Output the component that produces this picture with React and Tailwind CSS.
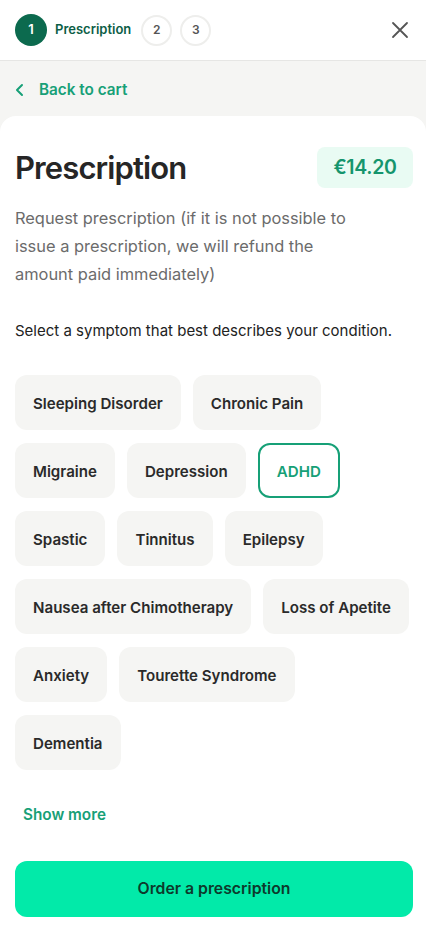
import React from "react";

const rows = [
  ["Sleeping Disorder", "Chronic Pain"],
  ["Migraine", "Depression", "ADHD"],
  ["Spastic", "Tinnitus", "Epilepsy"],
  ["Nausea after Chimotherapy", "Loss of Apetite"],
  ["Anxiety", "Tourette Syndrome"],
  ["Dementia"],
];

export default function App() {
  return (
    <div className="w-[426px] min-h-[926px] bg-white text-[#222222]" style={{ fontFamily: "Inter, 'Noto Sans', sans-serif" }}>
      <header className="h-[61px] flex items-center justify-between pl-[15px] pr-[17px] border-b border-[#e6e6e4] bg-white shadow-[0_1px_2px_rgba(0,0,0,0.04)]">
        <div className="flex items-center">
          <div className="w-[32px] h-[32px] rounded-full bg-[#0c6a4e] text-white flex items-center justify-center text-[13px] font-semibold">1</div>
          <span className="ml-[8px] text-[13px] font-semibold text-[#0c5e46]">Prescription</span>
          <div className="ml-[10px] w-[31px] h-[31px] rounded-full border-2 border-[#eeeeec] text-[#555] flex items-center justify-center text-[12px] font-semibold">2</div>
          <div className="ml-[8px] w-[31px] h-[31px] rounded-full border-2 border-[#eeeeec] text-[#555] flex items-center justify-center text-[12px] font-semibold">3</div>
        </div>
        <svg width="18" height="18" viewBox="0 0 18 18" fill="none" stroke="#555" strokeWidth="1.8" strokeLinecap="round">
          <path d="M2 2L16 16M16 2L2 16" />
        </svg>
      </header>

      <div className="bg-[#f5f5f3]">
        <div className="h-[55px] flex items-center pl-[15px] pt-[3px]">
          <svg width="10" height="14" viewBox="0 0 10 14" fill="none" stroke="#17a077" strokeWidth="2" strokeLinecap="round" strokeLinejoin="round">
            <path d="M7 2L2 7L7 12" />
          </svg>
          <span className="ml-[14px] text-[15.3px] font-semibold text-[#17a077]">Back to cart</span>
        </div>

        <main className="bg-white rounded-t-[16px] pl-[15px] pr-[13px] pt-[31px] pb-[9px]">
          <div className="flex items-center justify-between">
            <h1 className="text-[31px] font-semibold text-[#262626] tracking-[-0.9px] leading-none">Prescription</h1>
            <div className="h-[41px] w-[96px] rounded-[8px] bg-[#e9fbf3] flex items-center justify-center text-[19.5px] font-semibold text-[#15956d] tracking-[-0.3px]">€14.20</div>
          </div>
          <p className="mt-[16px] text-[16.4px] leading-[28px] text-[#6b6b6b] pr-[52px]">
            Request prescription (if it is not possible to issue a prescription, we will refund the amount paid immediately)
          </p>
          <p className="mt-[32px] text-[15px] leading-[22px] text-[#222]">Select a symptom that best describes your condition.</p>

          <div className="mt-[33px] flex flex-col gap-y-[13px]">
            {rows.map((row, i) => (
              <div key={i} className="flex gap-x-[12px]">
                {row.map((c) => {
                  const active = c === "ADHD";
                  return (
                    <button
                      key={c}
                      className={
                        active
                          ? "shrink-0 whitespace-nowrap h-[55px] pt-[3px] px-[17px] rounded-[12px] border-2 border-[#16a077] bg-white text-[#16a077] text-[15.1px] font-semibold"
                          : "shrink-0 whitespace-nowrap h-[55px] pt-[3px] px-[18px] rounded-[12px] bg-[#f5f5f3] text-[#2a2a2a] text-[15.1px] font-semibold"
                      }
                    >
                      {c}
                    </button>
                  );
                })}
              </div>
            ))}
          </div>

          <button className="mt-[34px] ml-[8px] text-[15.3px] font-semibold text-[#17a077]">Show more</button>

          <button className="mt-[34px] w-full h-[56px] rounded-[12px] bg-[#02eaa9] text-[#0d3a2c] text-[15.8px] font-semibold">
            Order a prescription
          </button>
        </main>
      </div>
    </div>
  );
}
